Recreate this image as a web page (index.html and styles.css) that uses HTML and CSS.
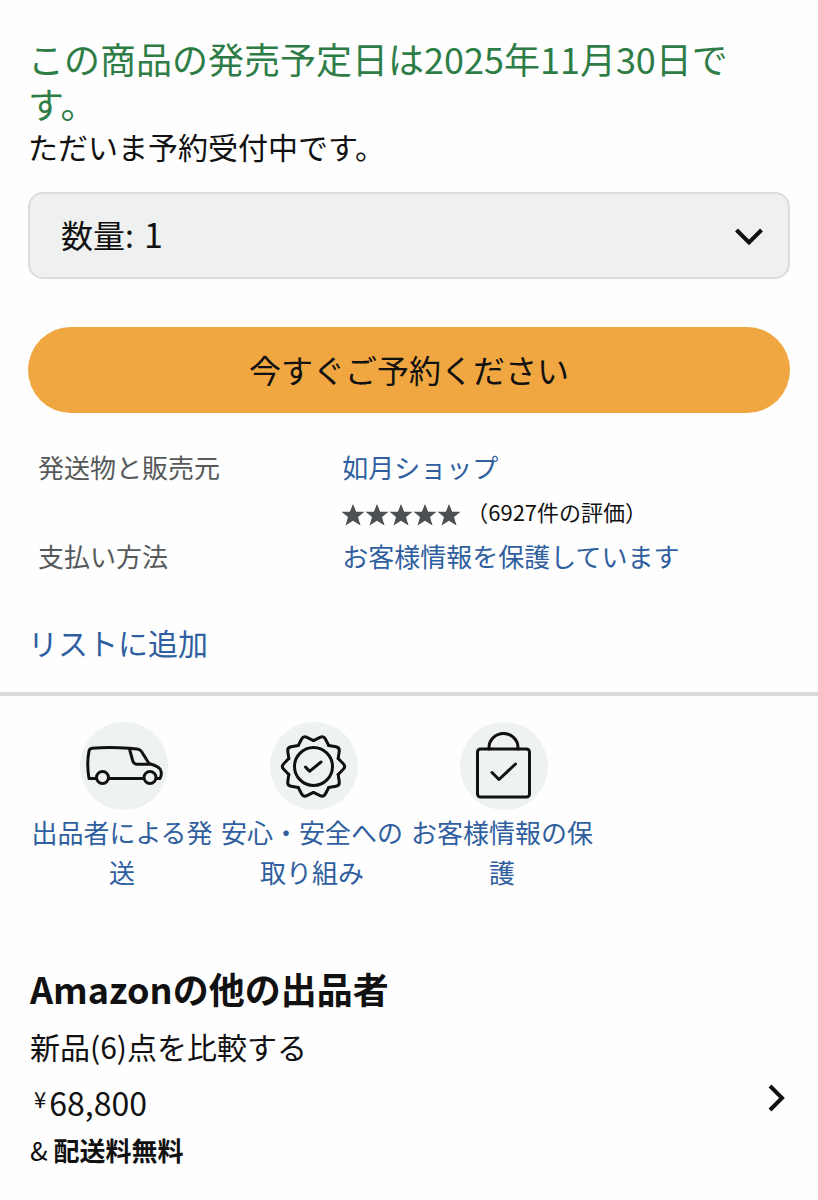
FILE: index.html
```html
<!DOCTYPE html>
<html lang="ja">

<head>
  <meta charset="utf-8">
  <meta name="viewport" content="width=device-width, initial-scale=1">
  <title>商品の予約</title>
  <link rel="stylesheet" href="styles.css">
</head>

<body>
  <main>
    <section class="buybox">
      <p class="release">この商品の発売予定日は2025年11月30日です。</p>
      <p class="preorder">ただいま予約受付中です。</p>

      <div class="quantity">
        <label for="quantity">数量:</label>
        <select id="quantity">
          <option>1</option>
          <option>2</option>
          <option>3</option>
        </select>
        <svg class="arrow" width="28" height="18" viewBox="0 0 28 18">
          <path d="M1.500 2L14 14.500L26.500 2" />
        </svg>
      </div>

      <button type="button" class="order">今すぐご予約ください</button>

      <dl class="details">
        <dt>発送物と販売元</dt>
        <dd>
          <a href="#">如月ショップ</a>
          <div class="rating">
            <svg width="118" height="22" viewBox="0 0 118 22" role="img" aria-label="星5つ">
              <defs>
                <path id="star" d="M11 0L14.200 7.800H22.500L16 13L18.500 21.500L11 16.800L3.500 21.500L6 13L-0.500 7.800H7.800Z" />
              </defs>
              <use href="#star" />
              <use href="#star" x="24" />
              <use href="#star" x="48" />
              <use href="#star" x="72" />
              <use href="#star" x="96" />
            </svg>
            <span>（6927件の評価）</span>
          </div>
        </dd>
        <dt>支払い方法</dt>
        <dd><a href="#">お客様情報を保護しています</a></dd>
      </dl>

      <a href="#" class="add-list">リストに追加</a>
    </section>

    <ul class="features">
      <li>
        <a href="#">
          <svg class="icon" viewBox="0 0 88 88">
            <path d="M16 56.500H9Q6.500 42 9 29Q9.500 26.500 12 26.200Q30 24.800 49 26.300L57 27Q60 27.300 61.500 29.500L69 41.500Q80 44.500 81 49Q82 53 80 56.500H77M29 56.500H63" />
            <path d="M49.500 27L52.500 38Q53.700 42.300 57 42.300H69" />
            <circle cx="22.500" cy="55.500" r="6" />
            <circle cx="70" cy="55.500" r="6" />
          </svg>
          <span>出品者による発送</span>
        </a>
      </li>
      <li>
        <a href="#">
          <svg class="icon" viewBox="0 0 88 88">
            <defs>
              <path id="tooth" d="M24.700 -8L29.800 -2.800Q32.500 0 29.800 2.800L24.700 8" />
            </defs>
            <g transform="translate(43.500 44.500)">
              <use href="#tooth" />
              <use href="#tooth" transform="rotate(36)" />
              <use href="#tooth" transform="rotate(72)" />
              <use href="#tooth" transform="rotate(108)" />
              <use href="#tooth" transform="rotate(144)" />
              <use href="#tooth" transform="rotate(180)" />
              <use href="#tooth" transform="rotate(216)" />
              <use href="#tooth" transform="rotate(252)" />
              <use href="#tooth" transform="rotate(288)" />
              <use href="#tooth" transform="rotate(324)" />
              <circle r="19" />
              <path d="M-8 0.500L-4 4.800L7.500 -4.500" />
            </g>
          </svg>
          <span>安心・安全への取り組み</span>
        </a>
      </li>
      <li>
        <a href="#">
          <svg class="icon" viewBox="0 0 88 88">
            <rect x="17.500" y="27" width="52" height="48" rx="3" />
            <path d="M29 27V25.500A14.500 14 0 0 1 58 25.500V27" />
            <path d="M32 50.500L39 57.500L55.500 42" />
          </svg>
          <span>お客様情報の保護</span>
        </a>
      </li>
    </ul>

    <section class="sellers">
      <h2>Amazonの他の出品者</h2>
      <a href="#" class="offer">
        <div>
          <p class="compare">新品(6)点を比較する</p>
          <p class="price"><span class="yen">¥</span>68,800</p>
          <p class="shipping">&amp; <b>配送料無料</b></p>
        </div>
        <svg class="arrow" width="18" height="28" viewBox="0 0 18 28">
          <path d="M2 2L14 14L2 26" />
        </svg>
      </a>
    </section>
  </main>
</body>

</html>
```
FILE: styles.css
```css
* {
  box-sizing: border-box;
}

body {
  margin: 0;
  background-color: #fefefe;
  color: #111;
  font-family: "Noto Sans CJK JP", sans-serif;
  font-size: 26px;
  line-height: 40px;
}

p,
h2,
dl,
dd,
ul {
  margin: 0;
  padding: 0;
}

a {
  color: #2f5f9f;
  text-decoration: none;
}

.buybox {
  padding: 36px 28px 28px;
  border-bottom: 4px solid #d7dada;
}

.release {
  color: #2e7d46;
  font-size: 36px;
  line-height: 45px;
}

.preorder {
  font-size: 30px;
}

.quantity {
  position: relative;
  display: flex;
  align-items: center;
  height: 87px;
  margin-top: 26px;
  padding: 0 0 4px 31px;
  border: 2px solid #dbdddd;
  border-radius: 15px;
  background-color: #eff1f1;
  font-size: 32px;
}

.quantity select {
  flex: 1;
  align-self: stretch;
  padding: 0 0 0 10px;
  border: none;
  background: none;
  color: inherit;
  font: inherit;
  font-size: 34px;
  appearance: none;
}

.quantity .arrow {
  position: absolute;
  top: 34px;
  right: 25px;
  pointer-events: none;
}

.arrow {
  fill: none;
  stroke: #111;
  stroke-width: 4px;
}

.order {
  width: 100%;
  height: 86px;
  margin-top: 48px;
  padding: 0 0 2px;
  border: none;
  border-radius: 43px;
  background-color: #f0a742;
  color: #111;
  font: inherit;
  font-size: 32px;
  cursor: pointer;
}

.details {
  display: grid;
  grid-template-columns: 41% 1fr;
  row-gap: 5px;
  margin-top: 34px;
  padding: 0 10px;
}

.details dt {
  color: #565959;
}

.rating {
  display: flex;
  align-items: center;
  gap: 6px;
  margin-top: 4px;
  font-size: 22px;
}

.rating svg {
  margin-top: 8px;
  fill: #4d5052;
}

.add-list {
  display: inline-block;
  margin-top: 46px;
  font-size: 30px;
}

.features {
  display: flex;
  padding: 26px 29px 0;
  list-style: none;
}

.features li {
  width: 190px;
}

.features a {
  display: flex;
  flex-direction: column;
  align-items: center;
  gap: 2px;
  text-align: center;
}

.features span {
  padding-right: 4px;
}

.icon {
  width: 88px;
  height: 88px;
  border-radius: 50%;
  background-color: #eff2f3;
  fill: none;
  stroke: #111;
  stroke-width: 3px;
  stroke-linecap: round;
  stroke-linejoin: round;
}

.sellers {
  padding: 72px 32px 24px 30px;
}

.sellers h2 {
  font-size: 36px;
  line-height: 48px;
}

.offer {
  display: flex;
  align-items: center;
  justify-content: space-between;
  margin-top: 14px;
  color: #111;
}

.compare {
  font-size: 30px;
}

.price {
  margin-top: 12px;
  padding-left: 4px;
  font-size: 32px;
}

.yen {
  margin-right: 3px;
  font-size: 22px;
  vertical-align: 8px;
}

.shipping {
  margin-top: 8px;
}
```
